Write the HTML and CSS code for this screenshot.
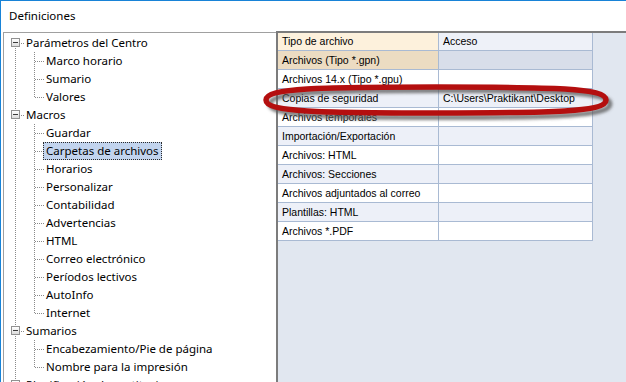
FILE: index.html
```html
<!DOCTYPE html>
<html>
<head>
<meta charset="utf-8">
<link rel="stylesheet" href="styles.css">
</head>
<body>
<div class="window">
  <div class="title">Definiciones</div>
  <div class="panes">
    <div class="tree">
      <div class="row root first"><span class="box"></span><span class="label">Parámetros del Centro</span></div>
      <div class="row child"><span class="label">Marco horario</span></div>
      <div class="row child"><span class="label">Sumario</span></div>
      <div class="row child last"><span class="label">Valores</span></div>
      <div class="row root"><span class="box"></span><span class="label">Macros</span></div>
      <div class="row child"><span class="label">Guardar</span></div>
      <div class="row child"><span class="label selected">Carpetas de archivos</span></div>
      <div class="row child"><span class="label">Horarios</span></div>
      <div class="row child"><span class="label">Personalizar</span></div>
      <div class="row child"><span class="label">Contabilidad</span></div>
      <div class="row child"><span class="label">Advertencias</span></div>
      <div class="row child"><span class="label">HTML</span></div>
      <div class="row child"><span class="label">Correo electrónico</span></div>
      <div class="row child"><span class="label">Períodos lectivos</span></div>
      <div class="row child"><span class="label">AutoInfo</span></div>
      <div class="row child last"><span class="label">Internet</span></div>
      <div class="row root"><span class="box"></span><span class="label">Sumarios</span></div>
      <div class="row child"><span class="label">Encabezamiento/Pie de página</span></div>
      <div class="row child last"><span class="label">Nombre para la impresión</span></div>
      <div class="row root"><span class="box"></span><span class="label">Planificación de sustituciones</span></div>
    </div>
    <div class="gridpane">
      <div class="grid">
        <div class="grow head"><div class="cell c1">Tipo de archivo</div><div class="cell c2">Acceso</div></div>
        <div class="grow sel"><div class="cell c1">Archivos (Tipo *.gpn)</div><div class="cell c2"></div></div>
        <div class="grow"><div class="cell c1">Archivos 14.x (Tipo *.gpu)</div><div class="cell c2"></div></div>
        <div class="grow alt"><div class="cell c1">Copias de seguridad</div><div class="cell c2">C:\Users\Praktikant\Desktop</div></div>
        <div class="grow"><div class="cell c1">Archivos temporales</div><div class="cell c2"></div></div>
        <div class="grow alt"><div class="cell c1">Importación/Exportación</div><div class="cell c2"></div></div>
        <div class="grow"><div class="cell c1">Archivos: HTML</div><div class="cell c2"></div></div>
        <div class="grow alt"><div class="cell c1">Archivos: Secciones</div><div class="cell c2"></div></div>
        <div class="grow"><div class="cell c1">Archivos adjuntados al correo</div><div class="cell c2"></div></div>
        <div class="grow alt"><div class="cell c1">Plantillas: HTML</div><div class="cell c2"></div></div>
        <div class="grow"><div class="cell c1">Archivos *.PDF</div><div class="cell c2"></div></div>
      </div>
    </div>
  </div>
  <svg class="mark" width="370" height="48" viewBox="0 0 370 48">
    <defs>
      <filter id="sh" x="-10%" y="-50%" width="120%" height="200%">
        <feGaussianBlur stdDeviation="1.8"/>
      </filter>
    </defs>
    <path d="M 11,23 C 11,11 64,9.5 181,9.5 C 298,9.5 351,11 351,23 C 351,35 298,36.5 181,36.5 C 64,36.5 11,35 11,23 Z" fill="none" stroke="#555" stroke-opacity="0.75" stroke-width="5" filter="url(#sh)"/>
    <path d="M 7,19 C 7,7 60,6 177,6 C 294,6 347,7 347,19 C 347,31 294,32 177,32 C 60,32 7,31 7,19 Z" fill="none" stroke="#b40f0f" stroke-width="5.5"/>
  </svg>
</div>
</body>
</html>
```

FILE: styles.css
```css
html, body {
  margin: 0;
  height: 100%;
  overflow: hidden;
}
body {
  background: #ffffff;
  font-family: "Noto Sans", "DejaVu Sans", sans-serif;
  color: #000;
}
.window {
  position: relative;
  height: 382px;
  box-sizing: border-box;
  border-top: 1px solid #1883d7;
  border-left: 1px solid #1883d7;
  display: flex;
  flex-direction: column;
}
.title {
  height: 30px;
  line-height: 30px;
  padding-left: 8px;
  font-size: 11.5px;
  flex: none;
}
.panes {
  flex: 1;
  display: flex;
  padding-left: 2px;
  min-height: 0;
}
.tree {
  width: 272px;
  flex: none;
  margin-top: 1px;
  border-top: 1px solid #a0a0a0;
  border-left: 1px solid #a0a0a0;
  padding-top: 1px;
  overflow: hidden;
  font-size: 11.5px;
}
.row {
  height: 18px;
  display: flex;
  align-items: center;
  white-space: nowrap;
}
.row.child {
  padding-left: 39px;
  background:
    repeating-linear-gradient(to bottom, #8a8a8a 0 1px, transparent 1px 2px) 11px 0 / 1px 18px no-repeat,
    repeating-linear-gradient(to bottom, #8a8a8a 0 1px, transparent 1px 2px) 30px 0 / 1px 18px no-repeat,
    repeating-linear-gradient(to right, #8a8a8a 0 1px, transparent 1px 2px) 31px 9px / 9px 1px no-repeat;
}
.row.child.last {
  background:
    repeating-linear-gradient(to bottom, #8a8a8a 0 1px, transparent 1px 2px) 11px 0 / 1px 18px no-repeat,
    repeating-linear-gradient(to bottom, #8a8a8a 0 1px, transparent 1px 2px) 30px 0 / 1px 10px no-repeat,
    repeating-linear-gradient(to right, #8a8a8a 0 1px, transparent 1px 2px) 31px 9px / 9px 1px no-repeat;
}
.row.root {
  padding-left: 7px;
  background:
    repeating-linear-gradient(to bottom, #8a8a8a 0 1px, transparent 1px 2px) 11px 0 / 1px 18px no-repeat,
    repeating-linear-gradient(to right, #8a8a8a 0 1px, transparent 1px 2px) 17px 9px / 4px 1px no-repeat;
}
.row.root.first {
  background:
    repeating-linear-gradient(to bottom, #8a8a8a 0 1px, transparent 1px 2px) 11px 10px / 1px 8px no-repeat,
    repeating-linear-gradient(to right, #8a8a8a 0 1px, transparent 1px 2px) 17px 9px / 4px 1px no-repeat;
}
.box {
  width: 7px;
  height: 7px;
  border: 1px solid #919191;
  background:
    linear-gradient(#3b3b3b, #3b3b3b) 1px 3px / 5px 1px no-repeat,
    linear-gradient(#ffffff, #dcdcdc);
  flex: none;
  margin-top: -1px;
}
.row.root .label {
  margin-left: 3px;
}
.label {
  display: inline-block;
  height: 16px;
  line-height: 16px;
  padding: 0 2px;
  border: 1px dotted transparent;
}
.label.selected {
  background: #c2d4ee;
  border-color: #2a2a2a;
}
.gridpane {
  flex: 1;
  border-top: 2px solid #7c7c7c;
  border-left: 2px solid #7c7c7c;
  background: #e1e7f0;
  min-width: 0;
}
.grid {
  display: flex;
  flex-direction: column;
  align-items: flex-start;
  font-family: "Liberation Sans", Arial, sans-serif;
  font-size: 10.5px;
}
.grow {
  display: flex;
  height: 19px;
  box-sizing: border-box;
  border-bottom: 1px solid #a9bad3;
  background: #ffffff;
}
.grow.head {
  height: 18px;
}
.cell {
  box-sizing: border-box;
  border-right: 1px solid #a9bad3;
  padding-left: 4px;
  line-height: 18px;
  white-space: nowrap;
  overflow: hidden;
}
.c1 { width: 161px; }
.c2 { width: 154px; }
.grow.head .c1 { background: #fdf1dc; line-height: 17px; }
.grow.head .c2 { background: #eef1f8; line-height: 17px; }
.grow.sel .c1 { background: #ecdcc2; }
.grow.sel .c2 { background: #d8deea; }
.grow.alt { background: #edf0f8; }
.mark {
  position: absolute;
  left: 258px;
  top: 80px;
}
```
